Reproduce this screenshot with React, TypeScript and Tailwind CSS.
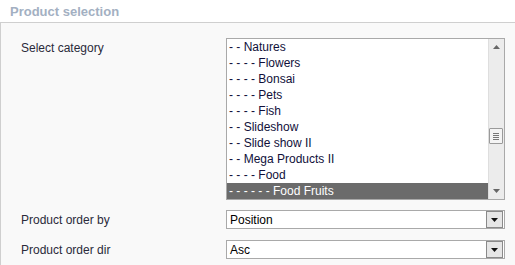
const categories = [
  "- - Natures",
  "- - - - Flowers",
  "- - - - Bonsai",
  "- - - - Pets",
  "- - - - Fish",
  "- - Slideshow",
  "- - Slide show II",
  "- - Mega Products II",
  "- - - - Food",
  "- - - - - - Food Fruits",
];

function DropArrow() {
  return (
    <div className="flex h-[17px] w-[17px] items-center justify-center border border-[#8a8a8a] bg-[#e6e6e6]">
      <svg width="7" height="4" viewBox="0 0 7 4">
        <path d="M0 0h7L3.5 4z" fill="#111" />
      </svg>
    </div>
  );
}

function SelectBox({ value }: { value: string }) {
  return (
    <div className="flex h-[19px] w-[279px] items-center justify-between border border-[#a9a9a9] bg-white pl-[3px] pr-px">
      <span className="text-[12px] leading-none text-black">{value}</span>
      <DropArrow />
    </div>
  );
}

function CategoryList() {
  return (
    <div className="flex h-[162px] w-[279px] border border-[#a9a9a9] bg-white">
      <ul className="flex-1">
        {categories.map((c, i) => (
          <li
            key={c}
            className={
              i === categories.length - 1
                ? "h-4 bg-[#6b6b6b] pl-[2px] text-[12px] leading-4 text-white"
                : "h-4 pl-[2px] text-[12px] leading-4 text-[#10103a]"
            }
          >
            {c}
          </li>
        ))}
      </ul>
      <div className="relative w-[16px] border-l border-[#dedede] bg-[#ececec]">
        <svg className="absolute left-[4px] top-[6px]" width="7" height="4" viewBox="0 0 7 4">
          <path d="M3.5 0L7 4H0z" fill="#666" />
        </svg>
        <div className="absolute left-0 top-[89px] flex h-[16px] w-[14px] flex-col items-center justify-center gap-px rounded-[1px] border border-[#9a9a9a] bg-[#f4f4f4]">
          <span className="h-px w-[6px] bg-[#777]" />
          <span className="h-px w-[6px] bg-[#777]" />
          <span className="h-px w-[6px] bg-[#777]" />
          <span className="h-px w-[6px] bg-[#777]" />
        </div>
        <svg className="absolute bottom-[6px] left-[4px]" width="7" height="4" viewBox="0 0 7 4">
          <path d="M0 0h7L3.5 4z" fill="#666" />
        </svg>
      </div>
    </div>
  );
}

export default function App() {
  return (
    <div className="h-[265px] w-[515px] bg-white font-['Liberation_Sans',Arial,sans-serif]">
      <div className="flex h-[22px] items-center pl-[10px]">
        <span className="text-[13px] font-bold leading-none text-[#a3b0c2]">Product selection</span>
      </div>
      <div className="h-[243px] border-l border-t border-[#cfcfcf] bg-[#f9f9f9] pl-[20px] pt-[15px]">
        <div className="grid grid-cols-[205px_279px] gap-y-[10px] text-[12px] text-[#2a2a3a]">
          <div className="pt-[2px] leading-4">Select category</div>
          <CategoryList />
          <div className="flex items-center">Product order by</div>
          <SelectBox value="Position" />
          <div className="mt-px flex items-center">Product order dir</div>
          <div className="mt-px">
            <SelectBox value="Asc" />
          </div>
        </div>
      </div>
    </div>
  );
}
